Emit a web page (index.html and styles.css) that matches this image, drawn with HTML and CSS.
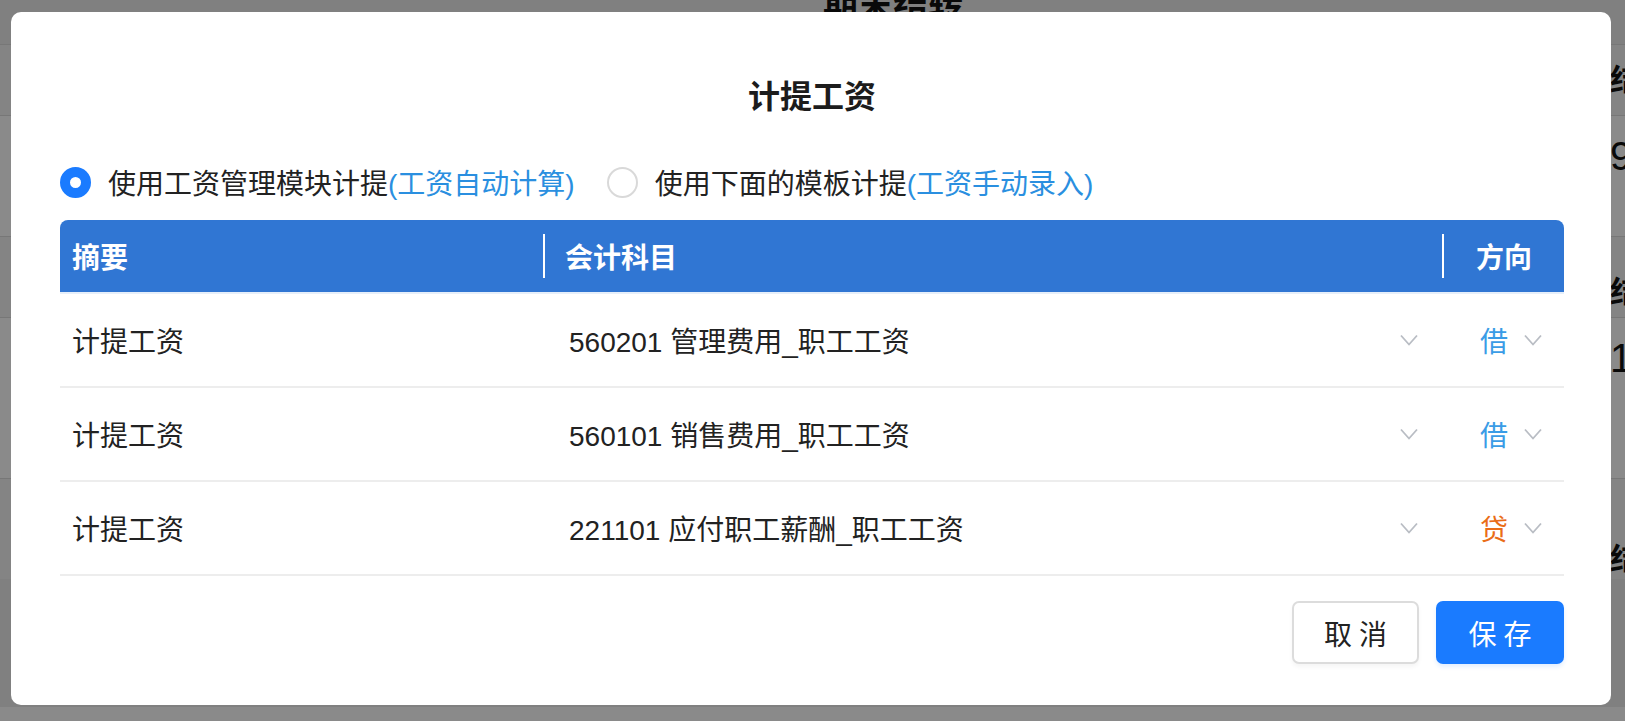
FILE: index.html
```html
<!DOCTYPE html>
<html>

<head>
  <title>计提工资</title>
  <link rel="stylesheet" href="styles.css">
</head>

<body>

  <div class="page">
    <h2 class="page-title">期末结转</h2>
    <div class="bg-row bg-r1"><span>结转</span></div>
    <div class="bg-row bg-r2"><span>9</span></div>
    <div class="bg-row bg-r3"><span>结转</span></div>
    <div class="bg-row bg-r4"><span>1</span></div>
    <div class="bg-row bg-r5"><span>结转</span></div>
  </div>

  <div class="mask"></div>

  <div class="dialog">
    <h3 class="dialog-title">计提工资</h3>

    <div class="mode-row">
      <label class="mode">
        <span class="radio radio-on"></span>
        使用工资管理模块计提<span class="hint">(工资自动计算)</span>
      </label>
      <label class="mode">
        <span class="radio"></span>
        使用下面的模板计提<span class="hint">(工资手动录入)</span>
      </label>
    </div>

    <div class="tbl">
      <div class="thead">
        <div class="th th-first">摘要</div>
        <div class="th-sep"></div>
        <div class="th th-subject">会计科目</div>
        <div class="th-sep"></div>
        <div class="th th-dir">方向</div>
      </div>

      <div class="tr">
        <div class="td td-first">计提工资</div>
        <div class="td td-subject">
          <span>560201 管理费用_职工工资</span>
          <svg class="arrow" width="18" height="12" viewBox="0 0 18 12"><path d="M1 1.5l8 9 8-9" fill="none" stroke="#b9bdc4" stroke-width="1.8"/></svg>
        </div>
        <div class="td td-dir">
          <span class="dir-debit">借</span>
          <svg class="arrow" width="18" height="12" viewBox="0 0 18 12"><path d="M1 1.5l8 9 8-9" fill="none" stroke="#b9bdc4" stroke-width="1.8"/></svg>
        </div>
      </div>

      <div class="tr">
        <div class="td td-first">计提工资</div>
        <div class="td td-subject">
          <span>560101 销售费用_职工工资</span>
          <svg class="arrow" width="18" height="12" viewBox="0 0 18 12"><path d="M1 1.5l8 9 8-9" fill="none" stroke="#b9bdc4" stroke-width="1.8"/></svg>
        </div>
        <div class="td td-dir">
          <span class="dir-debit">借</span>
          <svg class="arrow" width="18" height="12" viewBox="0 0 18 12"><path d="M1 1.5l8 9 8-9" fill="none" stroke="#b9bdc4" stroke-width="1.8"/></svg>
        </div>
      </div>

      <div class="tr">
        <div class="td td-first">计提工资</div>
        <div class="td td-subject">
          <span>221101 应付职工薪酬_职工工资</span>
          <svg class="arrow" width="18" height="12" viewBox="0 0 18 12"><path d="M1 1.5l8 9 8-9" fill="none" stroke="#b9bdc4" stroke-width="1.8"/></svg>
        </div>
        <div class="td td-dir">
          <span class="dir-credit">贷</span>
          <svg class="arrow" width="18" height="12" viewBox="0 0 18 12"><path d="M1 1.5l8 9 8-9" fill="none" stroke="#b9bdc4" stroke-width="1.8"/></svg>
        </div>
      </div>
    </div>

    <div class="dialog-footer">
      <button class="btn btn-cancel">取消</button>
      <button class="btn btn-save">保存</button>
    </div>
  </div>

</body>

</html>
```

FILE: styles.css
```css
body{
  margin: 0;
  background-color: #ffffff;
  font-family: "Liberation Sans", "Noto Sans CJK SC", sans-serif;
  color: #222222;
  overflow: hidden;
}

/* page behind the dialog */
.page{
  height: 721px;
  background-color: #ececec;
}

.page-title{
  margin: -14px 0 0 823px;
  font-size: 35px;
  font-weight: bold;
  line-height: 40px;
  color: #111;
}

.bg-row{
  padding-left: 1610px;
  font-size: 30px;
  font-weight: bold;
  color: #111;
  white-space: nowrap;
  border-top: 1px solid #dddddd;
}
.bg-r1{ margin-top: 18px; height: 70px; line-height: 70px; background: #f4f4f4; }
.bg-r2{ height: 120px; line-height: 80px; font-weight: normal; font-size: 40px; background: #fff; }
.bg-r3{ height: 80px; line-height: 110px; background: #f4f4f4; }
.bg-r4{ height: 160px; line-height: 80px; font-weight: normal; font-size: 40px; background: #fff; }
.bg-r5{ height: 100px; line-height: 160px; background: #f4f4f4; }

.mask{
  position: fixed;
  inset: 0;
  background-color: rgba(0, 0, 0, 0.46);
}

/* dialog */
.dialog{
  position: fixed;
  left: 11px;
  top: 12px;
  width: 1600px;
  height: 693px;
  box-sizing: border-box;
  padding: 0 47px 0 49px;
  background-color: #ffffff;
  border-radius: 10px;
}

.dialog-title{
  margin: 0;
  padding-top: 65px;
  line-height: 40px;
  font-size: 32px;
  font-weight: bold;
  text-align: center;
  color: #1c1c1c;
}

.mode-row{
  display: flex;
  align-items: center;
  height: 40px;
  margin-top: 45px;
}

.mode{
  display: flex;
  align-items: center;
  font-size: 28px;
  color: #222;
  margin-right: 32px;
  cursor: pointer;
}

.radio{
  width: 31px;
  height: 31px;
  box-sizing: border-box;
  border: 2px solid #d9d9d9;
  border-radius: 50%;
  margin-right: 17px;
}
.radio-on{
  border: 10px solid #1a7bff;
}

.hint{
  color: #2a8fe0;
}

/* table */
.tbl{
  margin-top: 18px;
}

.thead{
  display: grid;
  grid-template-columns: 483px 2px 897px 2px 1fr;
  align-items: center;
  height: 72px;
  background-color: #3076d3;
  border-radius: 8px 8px 0 0;
  border-bottom: 2px solid #e6effa;
  color: #ffffff;
  font-size: 28px;
  font-weight: bold;
}

.th-sep{
  height: 44px;
  background-color: #ffffff;
}

.th-first{ padding-left: 12px; }
.th-subject{ padding-left: 20px; }
.th-dir{ text-align: center; }

.tr{
  display: grid;
  grid-template-columns: 485px 899px 1fr;
  align-items: center;
  height: 92px;
  border-bottom: 2px solid #ededed;
  font-size: 28px;
}

.td-first{ padding-left: 12px; }

.td-subject{
  display: flex;
  align-items: center;
  justify-content: space-between;
  padding: 0 26px 0 24px;
}

.td-dir{
  display: flex;
  align-items: center;
  padding-left: 36px;
  gap: 16px;
}

.arrow{ display: block; }

.dir-debit{ color: #3a9ce6; }
.dir-credit{ color: #ea6d17; }

/* footer */
.dialog-footer{
  display: flex;
  justify-content: flex-end;
  gap: 17px;
  margin-top: 25px;
}

.btn{
  width: 127px;
  height: 63px;
  box-sizing: border-box;
  border-radius: 7px;
  font-family: "Liberation Sans", "Noto Sans CJK SC", sans-serif;
  font-size: 28px;
  letter-spacing: 7px;
  text-indent: 7px;
  cursor: pointer;
}

.btn-cancel{
  background-color: #ffffff;
  border: 2px solid #dcdcdc;
  color: #222;
  box-shadow: 0 3px 4px rgba(0, 0, 0, 0.04);
}

.btn-save{
  width: 128px;
  background-color: #1a7bff;
  border: none;
  color: #ffffff;
  box-shadow: 0 3px 4px rgba(26, 123, 255, 0.12);
}
```
